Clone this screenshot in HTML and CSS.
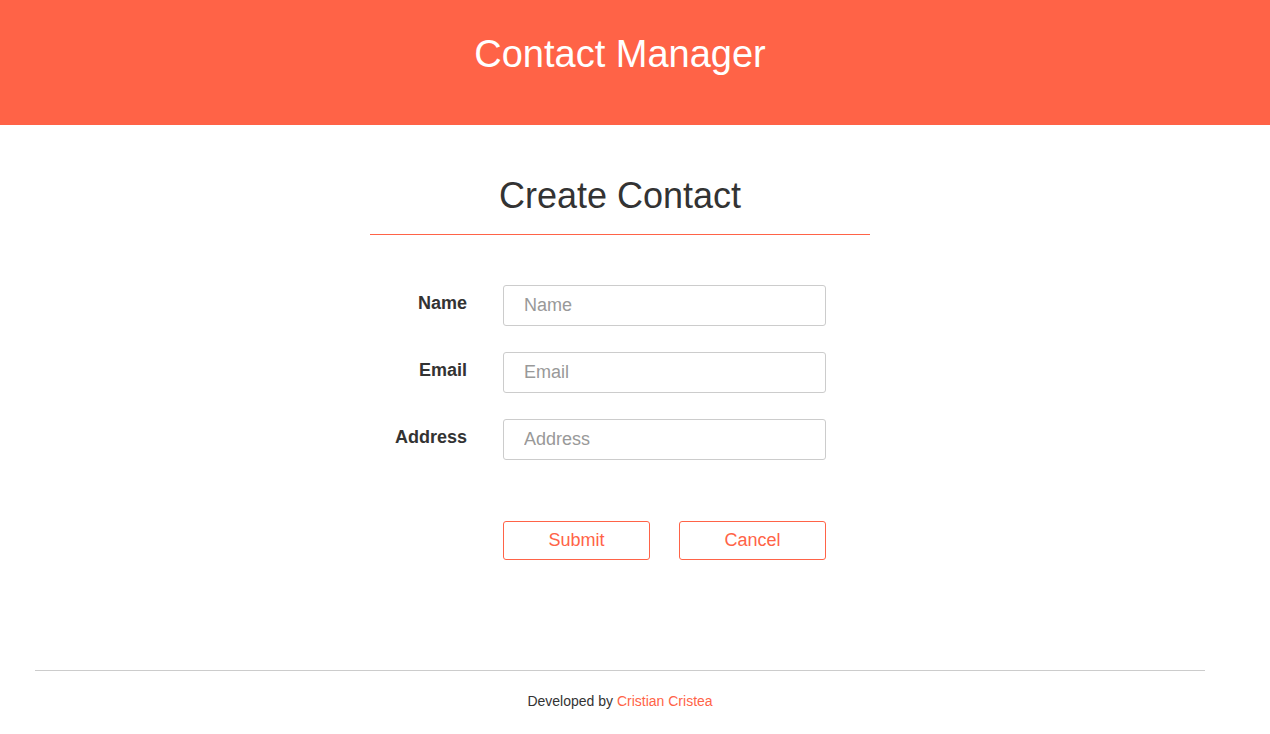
FILE: index.html
```html
<!DOCTYPE html>
<html>
<head>
<meta charset="utf-8">
<link rel="stylesheet" href="styles.css">
</head>
<body>
<header class="topbar"><h1 class="brand">Contact Manager</h1></header>
<div class="page">
<main class="content">
  <h2 class="page-title">Create Contact</h2>
  <form class="form">
    <div class="row"><label class="label">Name</label><input class="input" placeholder="Name"></div>
    <div class="row"><label class="label">Email</label><input class="input" placeholder="Email"></div>
    <div class="row"><label class="label">Address</label><input class="input" placeholder="Address"></div>
    <div class="actions">
      <button type="button" class="btn">Submit</button>
      <button type="button" class="btn">Cancel</button>
    </div>
  </form>
</main>
<footer class="footer">
  <p class="credit">Developed by <a class="author">Cristian Cristea</a></p>
</footer>
</div>
</body>
</html>
```
FILE: styles.css
```css
html, body { margin: 0; padding: 0; background: #fff; }
body { font-family: "Liberation Sans", Arial, sans-serif; color: #333; overflow: hidden; }
.page { width: 1240px; }
.topbar { background: #ff6347; height: 125px; display: flex; align-items: center; justify-content: center; padding-right: 30px; }
.brand { margin: 0; color: #fff; font-weight: normal; font-size: 38px; position: relative; top: -8px; }
.content { display: flex; flex-direction: column; align-items: center; padding-top: 54px; }
.page-title { margin: -2px 0 0; font-weight: normal; font-size: 36px; color: #333; width: 500px; text-align: center; padding-bottom: 18px; border-bottom: 1px solid #ff6347; line-height: 41px; position: relative; top: -2px; }
.form { margin-top: 48px; margin-right: 44px; display: flex; flex-direction: column; gap: 26px; }
.row { display: flex; align-items: flex-start; }
.label { width: 97px; text-align: right; font-weight: bold; font-size: 18px; padding-top: 8px; margin-right: 36px; }
.input { width: 323px; height: 41px; box-sizing: border-box; border: 1px solid #ccc; border-radius: 3px; padding: 0 20px; font-family: "Liberation Sans", Arial, sans-serif; font-size: 18px; color: #333; }
.input::placeholder { color: #999; }
.actions { display: flex; gap: 29px; margin-left: 133px; margin-top: 35px; }
.btn { width: 147px; height: 39px; box-sizing: border-box; background: #fff; border: 1px solid #ff6347; border-radius: 3px; color: #ff6347; font-family: "Liberation Sans", Arial, sans-serif; font-size: 18px; padding: 0; }
.footer { margin: 110px 35px 0; border-top: 1px solid #ccc; }
.credit { margin: 22px 0 0; text-align: center; font-size: 14px; color: #333; }
.author { color: #ff6347; }
```
